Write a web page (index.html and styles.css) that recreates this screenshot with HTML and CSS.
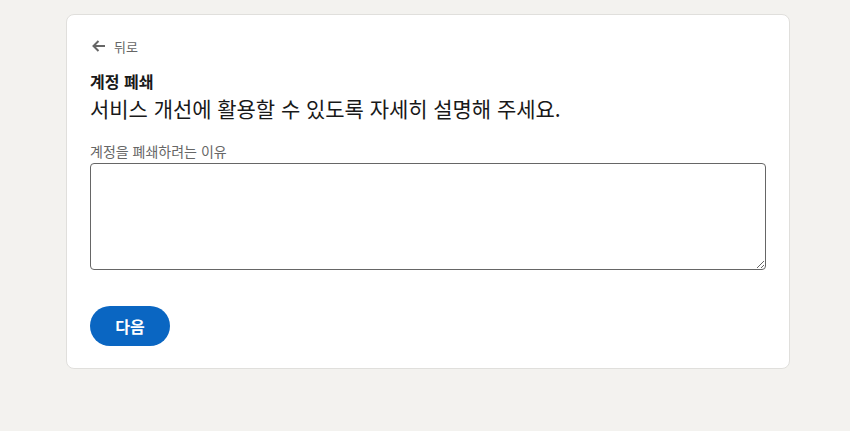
FILE: index.html
```html
<!DOCTYPE html>
<html lang="ko">
<head>
<meta charset="utf-8">
<link rel="stylesheet" href="styles.css">
</head>
<body>
<div class="card">
  <a class="back" href="#">
    <svg class="back-icon" width="16" height="16" viewBox="0 0 16 16"><path d="M7.5 3 2.5 8l5 5M3 8h11" fill="none" stroke="#666" stroke-width="2"/></svg>
    <span>뒤로</span>
  </a>
  <h1 class="title">계정 폐쇄</h1>
  <p class="subtitle">서비스 개선에 활용할 수 있도록 자세히 설명해 주세요.</p>
  <label class="label" for="reason">계정을 폐쇄하려는 이유</label>
  <textarea id="reason" class="reason"></textarea>
  <div class="actions">
    <button class="next" type="button">다음</button>
  </div>
</div>
</body>
</html>
```
FILE: styles.css
```css
html, body {
  margin: 0;
  padding: 0;
  background: #f3f2ef;
  font-family: "Noto Sans CJK KR", "Noto Sans", sans-serif;
}
.card {
  box-sizing: border-box;
  width: 724px;
  margin: 14px 0 0 66px;
  background: #fff;
  border: 1px solid #e0dfdc;
  border-radius: 8px;
  padding: 22px 23px 22px 23px;
  display: flex;
  flex-direction: column;
}
.back {
  display: flex;
  align-items: center;
  gap: 7px;
  color: #666;
  text-decoration: none;
  font-size: 13px;
  height: 18px;
}
.back-icon { margin-left: 1px; }
.title {
  margin: 16px 0 0;
  font-size: 16px;
  font-weight: 700;
  line-height: 20px;
  color: #191919;
}
.subtitle {
  margin: 3px 0 0;
  font-size: 21px;
  line-height: 28px;
  font-weight: 400;
  letter-spacing: -0.05px;
  color: #191919;
}
.label {
  margin-top: 19px;
  font-size: 14px;
  line-height: 20px;
  color: #666;
}
.reason {
  box-sizing: border-box;
  margin-top: 2px;
  width: 676px;
  height: 107px;
  border: 1px solid #666;
  border-radius: 4px;
  resize: vertical;
  font-family: inherit;
}
.actions {
  margin-top: 36px;
  display: flex;
}
.next {
  width: 80px;
  height: 40px;
  border: none;
  border-radius: 20px;
  background: #0a66c2;
  color: #fff;
  font-family: inherit;
  font-size: 16px;
  font-weight: 700;
}
```
